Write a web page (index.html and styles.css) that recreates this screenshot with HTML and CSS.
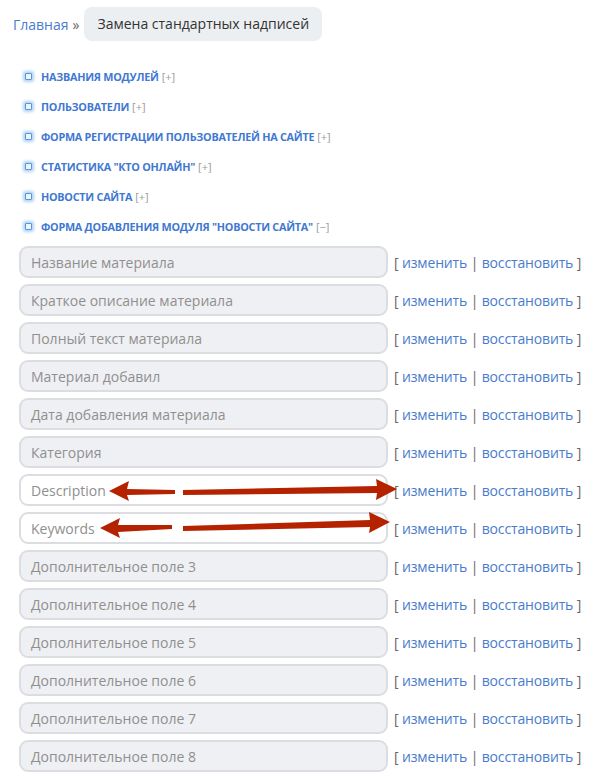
FILE: index.html
```html
<!DOCTYPE html>
<html lang="ru">
<head>
<meta charset="utf-8">
<link rel="stylesheet" href="styles.css">
</head>
<body>
<div class="page">
  <nav class="crumbs">
    <a class="crumb-link" href="#">Главная</a>
    <span class="crumb-sep">»</span>
    <span class="crumb-current">Замена стандартных надписей</span>
  </nav>

  <ul class="groups">
    <li class="group"><span class="dot"></span><a class="group-title" href="#">Названия модулей</a><span class="toggle">[+]</span></li>
    <li class="group"><span class="dot"></span><a class="group-title" href="#">Пользователи</a><span class="toggle">[+]</span></li>
    <li class="group"><span class="dot"></span><a class="group-title" href="#">Форма регистрации пользователей на сайте</a><span class="toggle">[+]</span></li>
    <li class="group"><span class="dot"></span><a class="group-title" href="#">Статистика "Кто онлайн"</a><span class="toggle">[+]</span></li>
    <li class="group"><span class="dot"></span><a class="group-title" href="#">Новости сайта</a><span class="toggle">[+]</span></li>
    <li class="group"><span class="dot"></span><a class="group-title" href="#">Форма добавления модуля "Новости сайта"</a><span class="toggle">[−]</span></li>
  </ul>

  <div class="fields">
    <div class="row"><div class="field">Название материала</div><div class="acts"><span class="br">[</span> <a href="#">изменить</a> <span class="br">|</span> <a href="#">восстановить</a> <span class="br">]</span></div></div>
    <div class="row"><div class="field">Краткое описание материала</div><div class="acts"><span class="br">[</span> <a href="#">изменить</a> <span class="br">|</span> <a href="#">восстановить</a> <span class="br">]</span></div></div>
    <div class="row"><div class="field">Полный текст материала</div><div class="acts"><span class="br">[</span> <a href="#">изменить</a> <span class="br">|</span> <a href="#">восстановить</a> <span class="br">]</span></div></div>
    <div class="row"><div class="field">Материал добавил</div><div class="acts"><span class="br">[</span> <a href="#">изменить</a> <span class="br">|</span> <a href="#">восстановить</a> <span class="br">]</span></div></div>
    <div class="row"><div class="field">Дата добавления материала</div><div class="acts"><span class="br">[</span> <a href="#">изменить</a> <span class="br">|</span> <a href="#">восстановить</a> <span class="br">]</span></div></div>
    <div class="row"><div class="field">Категория</div><div class="acts"><span class="br">[</span> <a href="#">изменить</a> <span class="br">|</span> <a href="#">восстановить</a> <span class="br">]</span></div></div>
    <div class="row"><div class="field field-white">Description</div><div class="acts"><span class="br">[</span> <a href="#">изменить</a> <span class="br">|</span> <a href="#">восстановить</a> <span class="br">]</span></div></div>
    <div class="row"><div class="field field-white">Keywords</div><div class="acts"><span class="br">[</span> <a href="#">изменить</a> <span class="br">|</span> <a href="#">восстановить</a> <span class="br">]</span></div></div>
    <div class="row"><div class="field">Дополнительное поле 3</div><div class="acts"><span class="br">[</span> <a href="#">изменить</a> <span class="br">|</span> <a href="#">восстановить</a> <span class="br">]</span></div></div>
    <div class="row"><div class="field">Дополнительное поле 4</div><div class="acts"><span class="br">[</span> <a href="#">изменить</a> <span class="br">|</span> <a href="#">восстановить</a> <span class="br">]</span></div></div>
    <div class="row"><div class="field">Дополнительное поле 5</div><div class="acts"><span class="br">[</span> <a href="#">изменить</a> <span class="br">|</span> <a href="#">восстановить</a> <span class="br">]</span></div></div>
    <div class="row"><div class="field">Дополнительное поле 6</div><div class="acts"><span class="br">[</span> <a href="#">изменить</a> <span class="br">|</span> <a href="#">восстановить</a> <span class="br">]</span></div></div>
    <div class="row"><div class="field">Дополнительное поле 7</div><div class="acts"><span class="br">[</span> <a href="#">изменить</a> <span class="br">|</span> <a href="#">восстановить</a> <span class="br">]</span></div></div>
    <div class="row"><div class="field">Дополнительное поле 8</div><div class="acts"><span class="br">[</span> <a href="#">изменить</a> <span class="br">|</span> <a href="#">восстановить</a> <span class="br">]</span></div></div>
  </div>
</div>

<svg class="arrows" width="602" height="782" viewBox="0 0 602 782" aria-hidden="true">
  <g fill="#b52200">
    <polygon points="109,491 129,481 127,489 175,490 175,494 127,495 129,501"/>
    <polygon points="183,490 377,486 376,479 397,489 376,500 377,493 183,495"/>
    <polygon points="100,528 120,518 118,525 172,525 172,529 118,532 120,538"/>
    <polygon points="183,526 370,520 369,512 390,522 369,533 370,527 183,531"/>
  </g>
</svg>
</body>
</html>
```

FILE: styles.css
```css
html, body {
  margin: 0;
  padding: 0;
  background: #ffffff;
}

body {
  font-family: "Open Sans", "Noto Sans", sans-serif;
  color: #333;
  position: relative;
  overflow: hidden;
  height: 782px;
}

a {
  text-decoration: none;
}

.page {
  padding: 7px 0 0 13px;
}

.crumbs {
  display: flex;
  align-items: center;
  height: 34px;
  font-size: 14px;
}

.crumb-link {
  color: #4a7ccc;
}

.crumb-sep {
  color: #666;
  margin: 0 5px 0 4px;
}

.crumb-current {
  background: #eceff1;
  border-radius: 8px;
  height: 34px;
  line-height: 34px;
  padding: 0 13px;
  color: #333;
}

.groups {
  list-style: none;
  margin: 20px 0 0 0;
  padding: 0;
}

.group {
  display: flex;
  align-items: center;
  height: 30px;
  padding-left: 12px;
}

.dot {
  width: 5px;
  height: 5px;
  border: 1px solid #5a94dc;
  border-radius: 1px;
  background: #eef6ff;
  box-shadow: 0 0 3px 2px rgba(110, 175, 240, 0.55);
  margin-right: 9px;
  flex: none;
}

.group-title {
  color: #3f78d2;
  font-weight: 700;
  font-size: 10.8px;
  text-transform: uppercase;
  letter-spacing: -0.25px;
}

.toggle {
  color: #9a9a9a;
  font-size: 11px;
  margin-left: 3px;
}

.fields {
  margin: 5px 0 0 6px;
  display: flex;
  flex-direction: column;
  gap: 6px;
}

.row {
  display: flex;
  align-items: center;
  gap: 6px;
}

.field {
  width: 369px;
  height: 32px;
  box-sizing: border-box;
  border: 2px solid #dcdde1;
  border-radius: 9px;
  background: #eff0f3;
  padding: 0 10px;
  display: flex;
  align-items: center;
  font-size: 14px;
  color: #8f8f8f;
  flex: none;
}

.field-white {
  background: #ffffff;
}

.acts {
  font-size: 14px;
  letter-spacing: -0.15px;
  white-space: nowrap;
}

.acts .br {
  color: #666;
}

.acts a {
  color: #4a7ccc;
}

.arrows {
  position: absolute;
  left: 0;
  top: 0;
  pointer-events: none;
}
```
